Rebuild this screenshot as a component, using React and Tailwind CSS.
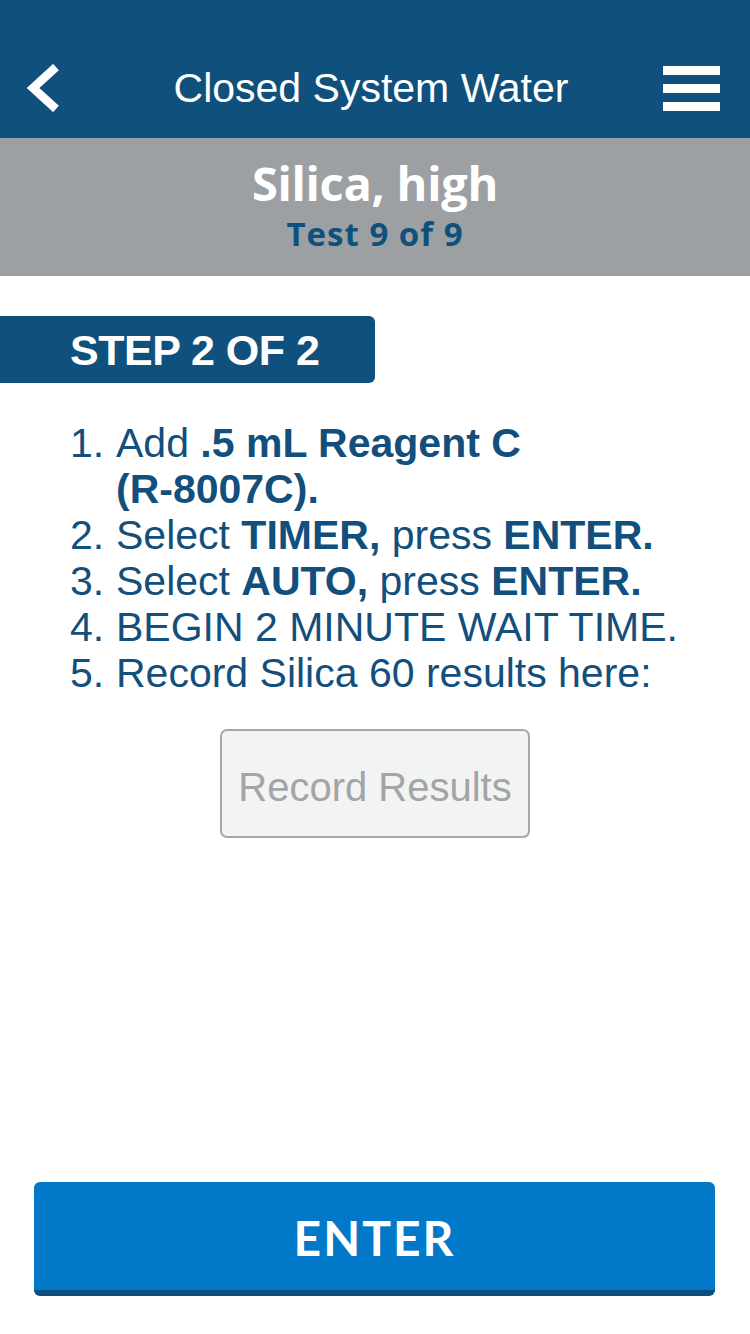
import { useState } from "react";

const steps = [
  { n: "1.", body: <>Add <b>.5 mL Reagent C</b><br /><b>(R-8007C).</b></> },
  { n: "2.", body: <>Select <b>TIMER,</b> press <b>ENTER.</b></> },
  { n: "3.", body: <>Select <b>AUTO,</b> press <b>ENTER.</b></> },
  { n: "4.", body: <>BEGIN 2 MINUTE WAIT TIME.</> },
  { n: "5.", body: <>Record Silica 60 results here:</> },
];

const App = () => {
  const [result, setResult] = useState("");

  return (
    <div className="h-[1334px] w-[750px] flex flex-col bg-white font-['Liberation_Sans',Arial,sans-serif]">
      <header className="h-[138px] bg-[#10507c] flex items-center justify-between pt-[38px] pl-[25px] pr-[30px] text-white">
        <button className="w-[40px] h-[50px] flex items-center">
          <svg width="36" height="48" viewBox="0 0 36 48">
            <path d="M31 3 L8 24 L31 45" fill="none" stroke="white" strokeWidth="8.5" />
          </svg>
        </button>
        <h1 className="text-[41px] leading-none ml-[14px]">Closed System Water</h1>
        <button className="w-[57px] flex flex-col gap-[9px]">
          <span className="h-[9px] bg-white block" />
          <span className="h-[9px] bg-white block" />
          <span className="h-[9px] bg-white block" />
        </button>
      </header>

      <div className="h-[138px] bg-[#9ca0a2] flex flex-col items-center justify-center font-['Open_Sans',sans-serif] font-bold">
        <p className="text-white text-[47px] leading-none mt-[-4px] tracking-[-0.3px]">Silica, high</p>
        <p className="text-[#10507c] text-[33px] leading-none mt-[10px] tracking-[1px]">Test 9 of 9</p>
      </div>

      <div className="mt-[40px] w-[375px] h-[67px] bg-[#10507c] rounded-r-[6px] flex items-center pl-[70px]">
        <span className="text-white font-bold text-[43px] leading-none tracking-[-0.5px] pt-[2px]">STEP 2 OF 2</span>
      </div>

      <ol className="mt-[37px] pl-[70px] text-[#124f7c] text-[41px] leading-[46px]">
        {steps.map((s) => (
          <li key={s.n} className="flex">
            <span className="w-[46px] shrink-0">{s.n}</span>
            <span>{s.body}</span>
          </li>
        ))}
      </ol>

      <div className="flex justify-center mt-[33px]">
        <input
          value={result}
          onChange={(e) => setResult(e.target.value)}
          placeholder="Record Results"
          className="w-[310px] h-[109px] border-2 border-[#a5a7a8] rounded-[7px] bg-[#f2f3f3] text-center text-[40px] text-[#555] placeholder:text-[#a2a4a5] outline-none pt-[8px]"
        />
      </div>

      <div className="mt-auto pl-[34px] pr-[35px] pb-[38px]">
        <button className="w-full h-[114px] bg-[#0279c8] rounded-[6px] border-b-[6px] border-[#0d4f7c] text-white font-['Lato',sans-serif] font-bold text-[48px] tracking-[2px] pt-[4px]">
          ENTER
        </button>
      </div>
    </div>
  );
};

export default App;
